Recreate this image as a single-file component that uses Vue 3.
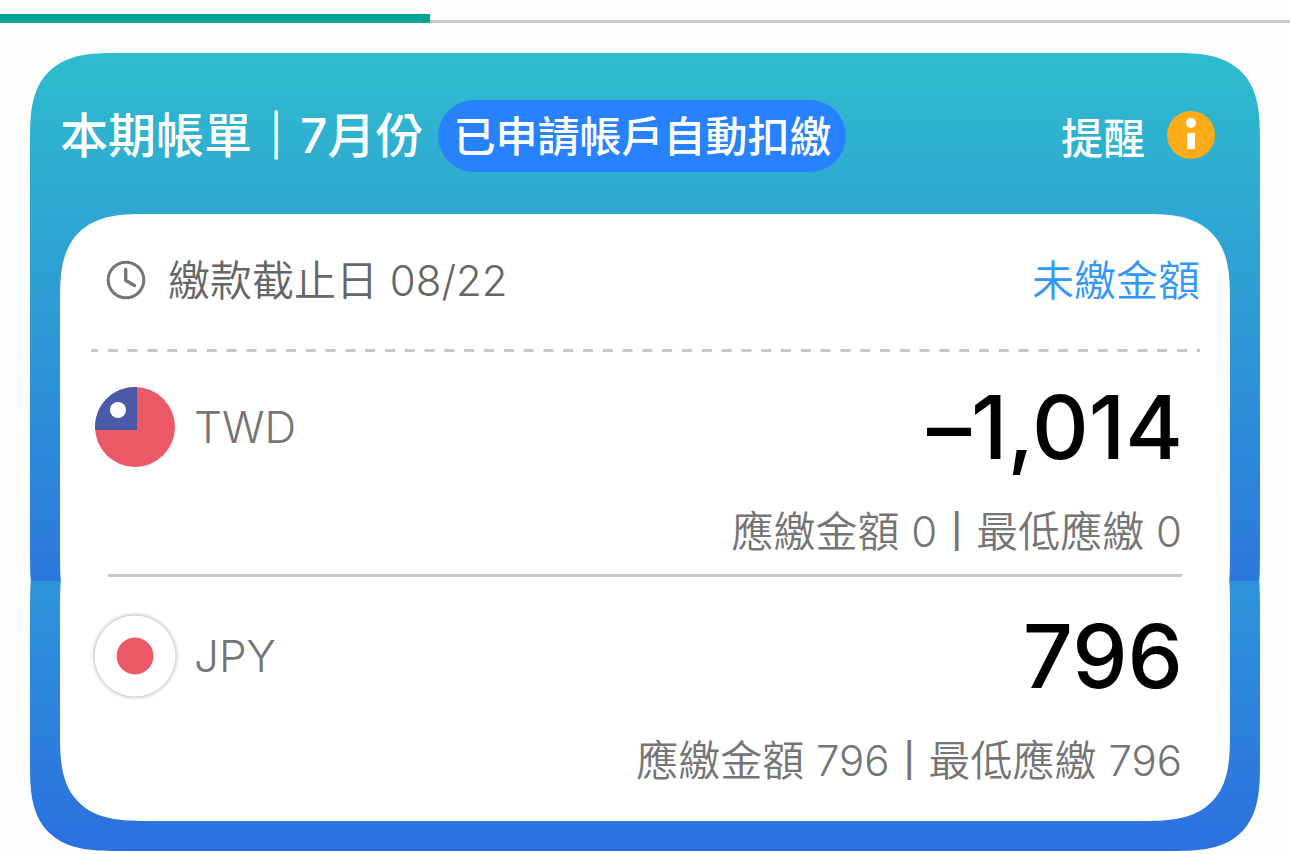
<script setup>
const bill = {
  name: '本期帳單',
  month: '7月份',
  status: '已申請帳戶自動扣繳',
  reminder: '提醒',
  due: '繳款截止日 08/22',
  unpaidLabel: '未繳金額',
}
const twd = { code: 'TWD', amount: '–1,014', payable: '應繳金額 0', minimum: '最低應繳 0' }
const jpy = { code: 'JPY', amount: '796', payable: '應繳金額 796', minimum: '最低應繳 796' }
</script>

<template>
  <main class="page">
    <div class="tabs"><span class="tab-active"></span></div>

    <article class="card">
      <section class="upper">
        <header class="head">
          <h1 class="title">{{ bill.name }}<span class="title-bar">｜</span>{{ bill.month }}</h1>
          <span class="status">{{ bill.status }}</span>
          <button class="reminder" type="button">
            {{ bill.reminder }}
            <svg class="info" viewBox="0 0 48 48" aria-hidden="true">
              <circle cx="24" cy="24" r="24" fill="#ffac18" />
              <circle cx="24" cy="12" r="5" fill="#fff" />
              <rect x="20" y="22" width="8" height="16" fill="#fff" />
            </svg>
          </button>
        </header>

        <div class="panel panel-top">
          <div class="due-row">
            <svg class="clock" viewBox="0 0 40 40" fill="none" stroke="#757575" aria-hidden="true">
              <circle cx="20" cy="20" r="17.8" stroke-width="3" />
              <path d="M19.7 9.5V20.5L28.5 25.5" stroke-width="3.4" stroke-linecap="round" stroke-linejoin="round" />
            </svg>
            <span class="due">{{ bill.due }}</span>
            <a class="unpaid" href="#">{{ bill.unpaidLabel }}</a>
          </div>
          <svg class="dashes" aria-hidden="true">
            <line x1="0" y1="1.5" x2="100%" y2="1.5" stroke="#c8c8c8" stroke-width="3" stroke-dasharray="10 9.8" stroke-dashoffset="3" />
          </svg>
          <div class="currency">
            <svg class="flag" viewBox="0 0 84 84" aria-hidden="true">
              <circle cx="42" cy="42" r="40" fill="#ec5966" />
              <path d="M44 2.05V45H2.1A40 40 0 0 1 44 2.05Z" fill="#4a59a8" />
              <circle cx="25" cy="25" r="8" fill="#fff" />
            </svg>
            <span class="code">{{ twd.code }}</span>
            <strong class="amount">{{ twd.amount }}</strong>
          </div>
          <p class="detail">
            <span>{{ twd.payable }}</span><span class="bar">|</span><span>{{ twd.minimum }}</span>
          </p>
          <hr class="rule" />
        </div>
      </section>

      <section class="lower">
        <div class="panel panel-bottom">
          <div class="currency">
            <svg class="flag jp" viewBox="0 0 84 84" aria-hidden="true">
              <circle cx="42" cy="42" r="40.5" fill="#fff" />
              <circle cx="42" cy="42" r="18.5" fill="#ec5966" />
            </svg>
            <span class="code">{{ jpy.code }}</span>
            <strong class="amount">{{ jpy.amount }}</strong>
          </div>
          <p class="detail">
            <span>{{ jpy.payable }}</span><span class="bar">|</span><span>{{ jpy.minimum }}</span>
          </p>
        </div>
      </section>
    </article>
  </main>
</template>

<style>
body {
  background: #fefefe;
}
</style>

<style scoped>
.page {
  box-sizing: border-box;
  padding-top: 14px;
  overflow: hidden;
  font-family: Inter, "Noto Sans CJK TC", sans-serif;
  font-weight: 350;
  color: #757575;
}
.tabs {
  display: flex;
  box-sizing: border-box;
  height: 9px;
  background: linear-gradient(#c8c9c9, #c8c9c9) bottom / 100% 3px no-repeat;
}
.tab-active {
  width: 33.33%;
  background: #00a297;
}
.card {
  margin: 30px 30px 0;
}
.upper {
  padding: 0 30px;
  background: linear-gradient(#2fbccd, #2c78dd);
}
.lower {
  padding: 0 30px 30px;
  background: linear-gradient(#2e95d9, #2c70df);
}
.upper,
.panel-top {
  border-radius: 64px 64px 1px 1px / 64px 64px 30px 30px;
}
.lower,
.panel-bottom {
  border-radius: 1px 1px 64px 64px / 30px 30px 64px 64px;
}
@supports (corner-shape: superellipse(1.5)) {
  .upper,
  .panel-top {
    border-radius: 86px 86px 1px 1px / 86px 86px 30px 30px;
    corner-shape: superellipse(1.5) superellipse(1.5) round round;
  }
  .lower,
  .panel-bottom {
    border-radius: 1px 1px 86px 86px / 30px 30px 86px 86px;
    corner-shape: round round superellipse(1.5) superellipse(1.5);
  }
}
.head {
  display: flex;
  align-items: center;
  box-sizing: border-box;
  height: 161px;
  padding: 3px 15px 0 0;
  color: #fff;
}
.title {
  margin: 0 15px 0 0;
  padding-bottom: 6px;
  font-size: 48px;
  font-weight: 500;
  white-space: nowrap;
}
.title-bar {
  -webkit-text-stroke: 1px #fff;
}
.status {
  box-sizing: border-box;
  height: 72px;
  margin-top: 2px;
  padding: 2px 15px 0;
  border-radius: 36px;
  background: #2882ff;
  font-size: 42px;
  font-weight: 500;
  line-height: 70px;
  white-space: nowrap;
}
.reminder {
  display: flex;
  align-items: center;
  gap: 22px;
  margin-left: auto;
  padding: 0;
  border: 0;
  background: none;
  color: #fff;
  font: inherit;
  font-size: 42px;
  font-weight: 500;
}
.info {
  width: 48px;
  height: 48px;
}
.panel {
  display: flow-root;
  background: #fff;
}
.panel-bottom {
  padding-bottom: 30px;
}
.due-row {
  display: flex;
  align-items: center;
  box-sizing: border-box;
  height: 135px;
  padding: 0 30px 3px 46px;
  font-size: 42px;
}
.clock {
  width: 40px;
  height: 40px;
  margin-right: 22px;
}
.due,
.unpaid {
  padding-bottom: 6px;
}
.due {
  color: #666;
}
.unpaid {
  margin-left: auto;
  color: #3296fc;
  text-decoration: none;
}
.dashes {
  display: block;
  box-sizing: border-box;
  width: calc(100% - 61px);
  height: 3px;
  margin-left: 31px;
}
.currency {
  display: flex;
  align-items: center;
  height: 150px;
  padding: 0 47px 0 33px;
}
.flag {
  width: 84px;
  height: 84px;
  margin-right: 17px;
}
.jp {
  filter: drop-shadow(0 0 2px #999);
}
.code {
  font-size: 44px;
}
.amount {
  margin-left: auto;
  color: #000;
  font-size: 88px;
  font-weight: 500;
  font-variant-ligatures: no-contextual;
  line-height: 108px;
}
.detail {
  display: flex;
  justify-content: flex-end;
  gap: 14px;
  margin: 0 48px;
  font-size: 42px;
  line-height: 60px;
}
.bar {
  font-family: "Liberation Sans", sans-serif;
  line-height: 52px;
}
.rule {
  height: 3px;
  margin: 12px 48px 4px;
  border: 0;
  background: #c8c8c8;
}
</style>
